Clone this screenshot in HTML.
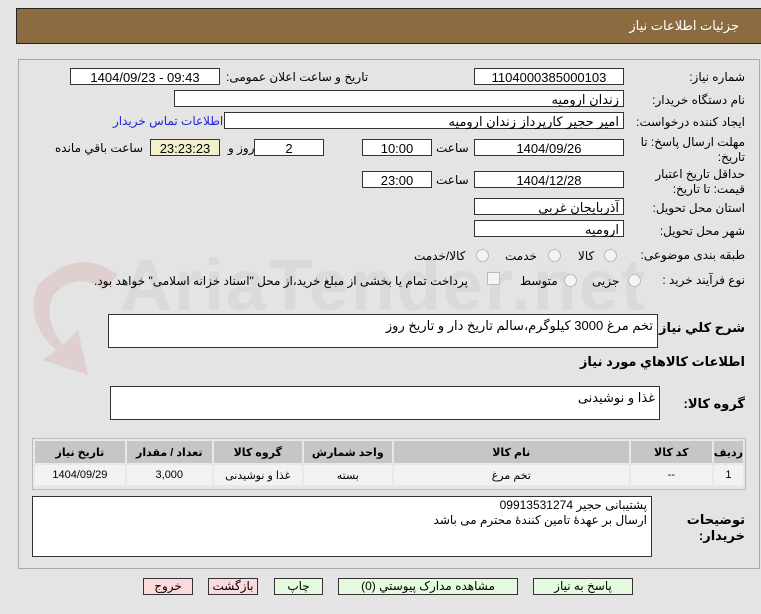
<!DOCTYPE html>
<html><head><meta charset="utf-8"><style>
body{margin:0;width:761px;height:614px;background:#e4e4e4;position:relative;overflow:hidden;font-family:Tahoma,"Liberation Sans","DejaVu Sans",sans-serif;font-size:12px;color:#000}
.a{position:absolute}
.hd{left:16px;top:8px;width:748px;height:34px;background:#8c6b40;border:1px solid #222;}
.hd span{position:absolute;right:26px;top:9px;color:#fff;font-size:13px}
.pn{left:18px;top:59px;width:740px;height:508px;border:1px solid #aaa;}
.bx{position:absolute;background:#fff;border:1px solid #333;height:17px;line-height:17px;text-align:center;font-size:13px;box-sizing:border-box}
.r{text-align:right;padding-right:4px}
.l{position:absolute;white-space:nowrap;direction:rtl}
.ta{position:absolute;background:#fff;border:1px solid #333;box-sizing:border-box;direction:rtl;padding:3px 4px;font-size:12px}
.rd{position:absolute;width:11px;height:11px;border-radius:50%;border:1px solid #bbb;background:#f4f4f4}
table{border-collapse:separate;border-spacing:2px;}
td{text-align:center;font-size:11px;padding:0}
.th td{background:#c6c6c6;font-weight:bold;height:22px}
.tr td{background:#f2f2f2;height:20px}
.btn{position:absolute;top:578px;height:17px;border:1px solid #333;box-sizing:border-box;text-align:center;line-height:15px;font-size:12px}
.g{background:#e4fbe0}.p{background:#fadada}
.wm{position:absolute;left:120px;top:245px;font-size:72px;font-weight:bold;color:rgba(150,150,150,0.12);font-family:"Liberation Sans",sans-serif;letter-spacing:2px}
</style></head><body>
<div class="a hd"><span>جزئیات اطلاعات نیاز</span></div>
<div class="a pn"></div>
<div class="wm">AriaTender.net</div>
<svg class="a" style="left:18px;top:245px" width="130" height="140"><path d="M20 40 Q60 0 100 30 L85 45 Q60 25 35 50 Q25 75 45 100 L60 85 L70 130 L25 115 L38 105 Q5 75 20 40Z" fill="rgba(200,60,60,0.12)"/></svg>

<div class="l" style="right:16px;top:70px">شماره نیاز:</div>
<div class="bx" style="left:474px;top:68px;width:150px">1104000385000103</div>
<div class="l" style="left:226px;top:70px">تاریخ و ساعت اعلان عمومی:</div>
<div class="bx" style="left:70px;top:68px;width:150px">1404/09/23 - 09:43</div>

<div class="l" style="right:16px;top:93px">نام دستگاه خریدار:</div>
<div class="bx r" style="left:174px;top:90px;width:450px">زندان ارومیه</div>

<div class="l" style="right:16px;top:115px">ایجاد کننده درخواست:</div>
<div class="bx r" style="left:224px;top:112px;width:400px">امیر حجیر کارپرداز زندان ارومیه</div>
<div class="l" style="left:113px;top:114px;color:#2222dd">اطلاعات تماس خریدار</div>

<div class="l" style="right:16px;top:135px">مهلت ارسال پاسخ: تا</div>
<div class="l" style="right:16px;top:150px">تاریخ:</div>
<div class="bx" style="left:474px;top:139px;width:150px">1404/09/26</div>
<div class="l" style="left:436px;top:141px">ساعت</div>
<div class="bx" style="left:362px;top:139px;width:70px">10:00</div>
<div class="bx" style="left:254px;top:139px;width:70px">2</div>
<div class="l" style="left:228px;top:141px">روز و</div>
<div class="bx" style="left:150px;top:139px;width:70px;background:#f4f0cc">23:23:23</div>
<div class="l" style="left:55px;top:141px">ساعت باقي مانده</div>

<div class="l" style="right:16px;top:167px">حداقل تاریخ اعتبار</div>
<div class="l" style="right:16px;top:182px">قیمت: تا تاریخ:</div>
<div class="bx" style="left:474px;top:171px;width:150px">1404/12/28</div>
<div class="l" style="left:436px;top:173px">ساعت</div>
<div class="bx" style="left:362px;top:171px;width:70px">23:00</div>

<div class="l" style="right:16px;top:201px">استان محل تحویل:</div>
<div class="bx r" style="left:474px;top:198px;width:150px">آذربایجان غربی</div>
<div class="l" style="right:16px;top:224px">شهر محل تحویل:</div>
<div class="bx r" style="left:474px;top:220px;width:150px">ارومیه</div>

<div class="l" style="right:16px;top:248px">طبقه بندی موضوعی:</div>
<div class="rd" style="left:604px;top:249px"></div><div class="l" style="left:578px;top:249px">کالا</div>
<div class="rd" style="left:548px;top:249px"></div><div class="l" style="left:505px;top:249px">خدمت</div>
<div class="rd" style="left:476px;top:249px"></div><div class="l" style="left:414px;top:249px">کالا/خدمت</div>

<div class="l" style="right:16px;top:273px">نوع فرآیند خرید :</div>
<div class="rd" style="left:628px;top:274px"></div><div class="l" style="left:592px;top:274px">جزیی</div>
<div class="rd" style="left:564px;top:274px"></div><div class="l" style="left:520px;top:274px">متوسط</div>
<div class="a" style="left:487px;top:272px;width:11px;height:11px;border:1px solid #bbb;background:#f4f4f4"></div>
<div class="l" style="left:94px;top:274px">پرداخت تمام یا بخشی از مبلغ خرید،از محل "اسناد خزانه اسلامی" خواهد بود.</div>

<div class="l" style="right:16px;top:320px;font-weight:bold;font-size:13px">شرح کلي نياز:</div>
<div class="ta" style="left:108px;top:314px;width:550px;height:34px;font-size:13px">تخم مرغ 3000 کیلوگرم،سالم تاریخ دار و تاریخ روز</div>
<div class="l" style="right:16px;top:354px;font-weight:bold;font-size:13px">اطلاعات کالاهاي مورد نياز</div>
<div class="l" style="right:16px;top:396px;font-weight:bold;font-size:13px">گروه کالا:</div>
<div class="ta" style="left:110px;top:386px;width:550px;height:34px;font-size:13px">غذا و نوشیدنی</div>

<div class="a" style="left:32px;top:438px;width:712px;height:50px;border:1px solid #bbb;background:#e8e8e8">
<table style="width:712px;direction:rtl">
<tr class="th"><td style="width:27px">ردیف</td><td style="width:81px">کد کالا</td><td style="width:235px">نام کالا</td><td style="width:88px">واحد شمارش</td><td style="width:88px">گروه کالا</td><td style="width:85px">تعداد / مقدار</td><td>تاریخ نیاز</td></tr>
<tr class="tr"><td>1</td><td>--</td><td>تخم مرغ</td><td>بسته</td><td>غذا و نوشیدنی</td><td>3,000</td><td>1404/09/29</td></tr>
</table></div>

<div class="l" style="right:16px;top:512px;font-weight:bold;font-size:13px">توضیحات</div>
<div class="l" style="right:16px;top:528px;font-weight:bold;font-size:13px">خریدار:</div>
<div class="ta" style="left:32px;top:496px;width:620px;height:61px;font-size:12px;line-height:15px;padding-top:1px">پشتیبانی حجیر 09913531274<br>ارسال بر عهدۀ تامین کنندۀ محترم می باشد</div>

<div class="btn g" style="left:533px;width:100px">پاسخ به نیاز</div>
<div class="btn g" style="left:338px;width:180px">مشاهده مدارک پیوستي (0)</div>
<div class="btn g" style="left:274px;width:49px">چاپ</div>
<div class="btn p" style="left:208px;width:50px">بازگشت</div>
<div class="btn p" style="left:143px;width:50px">خروج</div>
</body></html>
